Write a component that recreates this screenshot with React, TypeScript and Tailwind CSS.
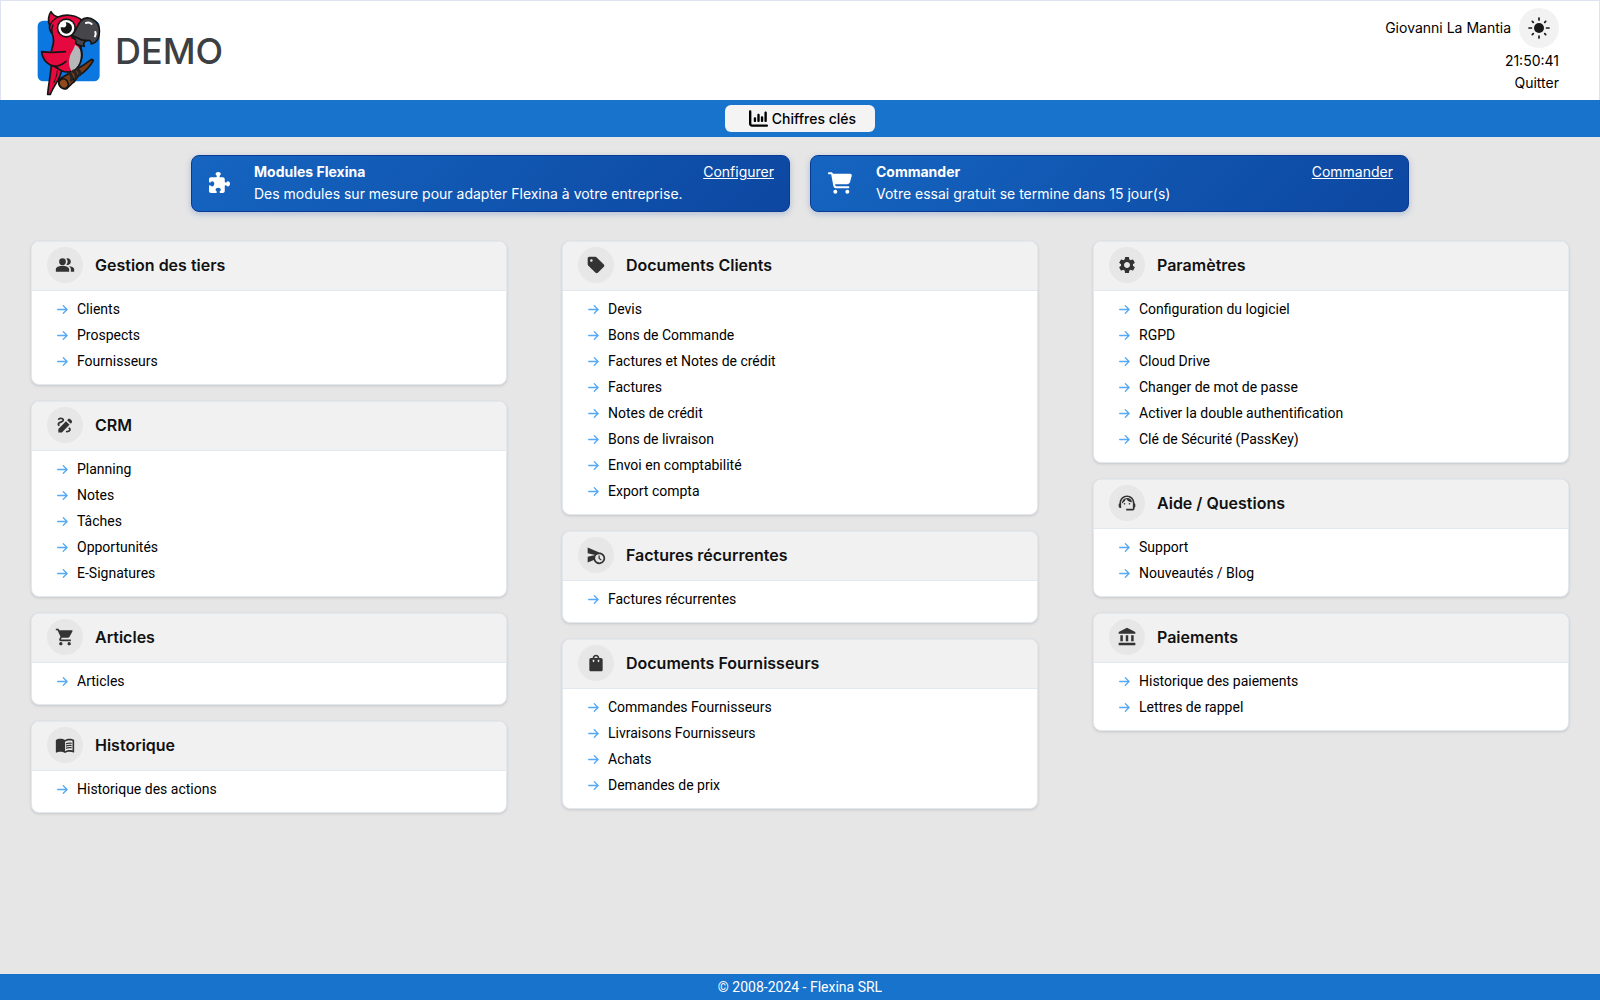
import type { IconType } from "react-icons";
import { FaCartShopping, FaChartColumn, FaPuzzlePiece } from "react-icons/fa6";
import {
  MdAccountBalance,
  MdDraw,
  MdMenuBook,
  MdPeopleAlt,
  MdScheduleSend,
  MdSell,
  MdSettings,
  MdShoppingBag,
  MdShoppingCart,
  MdSupportAgent
} from "react-icons/md";

type Section = { title: string; icon: IconType; links: string[] };

const columns: Section[][] = [
  [
    { title: "Gestion des tiers", icon: MdPeopleAlt, links: ["Clients", "Prospects", "Fournisseurs"] },
    { title: "CRM", icon: MdDraw, links: ["Planning", "Notes", "Tâches", "Opportunités", "E-Signatures"] },
    { title: "Articles", icon: MdShoppingCart, links: ["Articles"] },
    { title: "Historique", icon: MdMenuBook, links: ["Historique des actions"] }
  ],
  [
    {
      title: "Documents Clients",
      icon: MdSell,
      links: [
        "Devis",
        "Bons de Commande",
        "Factures et Notes de crédit",
        "Factures",
        "Notes de crédit",
        "Bons de livraison",
        "Envoi en comptabilité",
        "Export compta"
      ]
    },
    { title: "Factures récurrentes", icon: MdScheduleSend, links: ["Factures récurrentes"] },
    {
      title: "Documents Fournisseurs",
      icon: MdShoppingBag,
      links: ["Commandes Fournisseurs", "Livraisons Fournisseurs", "Achats", "Demandes de prix"]
    }
  ],
  [
    {
      title: "Paramètres",
      icon: MdSettings,
      links: [
        "Configuration du logiciel",
        "RGPD",
        "Cloud Drive",
        "Changer de mot de passe",
        "Activer la double authentification",
        "Clé de Sécurité (PassKey)"
      ]
    },
    { title: "Aide / Questions", icon: MdSupportAgent, links: ["Support", "Nouveautés / Blog"] },
    { title: "Paiements", icon: MdAccountBalance, links: ["Historique des paiements", "Lettres de rappel"] }
  ]
];

const banners = [
  {
    title: "Modules Flexina",
    text: "Des modules sur mesure pour adapter Flexina à votre entreprise.",
    action: "Configurer",
    icon: FaPuzzlePiece,
    iconClass: "size-[21px] shrink-0"
  },
  {
    title: "Commander",
    text: "Votre essai gratuit se termine dans 15 jour(s)",
    action: "Commander",
    icon: FaCartShopping,
    iconClass: "size-6 shrink-0"
  }
];

function ParrotLogo() {
  return (
    <svg viewBox="50 30 192 258" className="h-[86px] w-16" aria-hidden="true">
      <rect x="52" y="62" width="186" height="182" rx="17" fill="#0a78e0" />
      <g stroke="#151515" strokeWidth="5" strokeLinejoin="round" strokeLinecap="round">
        {/* tail */}
        <path d="M93 194 C91 225 84 255 82 283 L90 283 C99 259 118 240 124 212 Z" fill="#e6093f" />
        <path d="M101 248 C106 236 110 224 111 212" fill="none" strokeWidth="3" />
        {/* branch */}
        <path d="M147 215 C171 211 192 194 213 178 L219 181 C209 201 193 216 174 228 L160 247 Z" fill="#7a3c17" />
        <path d="M119 236 L148 219 L163 243 L139 266 C127 270 113 258 115 244 Z" fill="#7a3c17" />
        <ellipse cx="130" cy="251" rx="13" ry="15" fill="#8f4a1e" transform="rotate(-32 130 251)" />
        {/* body */}
        <path
          d="M92 35 C84 45 82 63 88 77 C86 87 89 94 96 102 C102 117 101 129 95 145 L92 160 C90 183 95 199 109 201 C119 212 134 218 150 215 C176 208 188 179 184 154 C183 140 180 133 174 126 L190 65 C169 44 137 41 113 51 C105 49 97 44 92 35 Z"
          fill="#e6093f"
        />
        <path d="M88 77 C93 65 102 57 113 51" fill="none" strokeWidth="4" />
        <path d="M96 102 C93 93 94 83 98 75" fill="none" strokeWidth="4" />
        {/* belly */}
        <path d="M164 134 C176 141 186 153 184 174 C182 191 173 208 155 215 C145 201 144 184 149 168 C153 154 160 151 164 134 Z" fill="#b7b7ba" stroke="none" />
        <path d="M174 132 C190 155 188 199 156 215" fill="none" />
        {/* wing */}
        <path d="M96 154 L64 155 C67 183 87 201 112 198 C125 194 134 188 137 184 L141 155 Z" fill="#e6093f" stroke="none" />
        <path d="M135 155 C112 157 87 159 64 155 C67 183 87 201 112 198 C124 195 132 190 137 184" fill="none" />
        {/* claws */}
        <path d="M147 218 C153 225 156 233 153 240 M160 213 C167 221 170 229 166 236 M171 208 C177 212 180 218 178 224" fill="none" stroke="#242424" strokeWidth="9" />
        {/* beak */}
        <path d="M154 104 C169 94 171 72 182 62 C192 51 209 51 222 61 C238 72 240 94 234 114 C230 124 221 130 213 132 C213 123 208 119 199 122 C191 124 188 132 192 139 C180 136 171 137 166 130 C169 121 164 115 155 113 Z" fill="#46464a" />
        <path d="M158 107 C174 113 181 124 199 121" fill="none" />
      </g>
      <circle cx="138" cy="84" r="29" fill="#151515" />
      <circle cx="138" cy="84" r="24" fill="#fff" />
      <circle cx="138" cy="84" r="17" fill="#151515" />
      <path d="M120 82 A18 18 0 0 1 136 66 L138 73 A8 8 0 0 1 128 82 Z" fill="#fff" />
      <path d="M197 69 C203 66 209 68 214 72 M225 96 C227 100 226 105 224 109" fill="none" stroke="#fff" strokeWidth="6" strokeLinecap="round" />
    </svg>
  );
}

function SunIcon() {
  return (
    <svg viewBox="0 0 22 22" className="size-[22px]" aria-hidden="true">
      <circle cx="11" cy="11" r="5" fill="#1a1a1a" />
      <path
        d="M11 1v2M11 19v2M1 11h2.5M18.5 11h2.5M4.3 4.3l1 1M16.7 16.7l1 1M17.7 4.3l-1 1M5.3 16.7l-1 1"
        stroke="#1a1a1a"
        strokeWidth="1.7"
        strokeLinecap="round"
      />
    </svg>
  );
}

function ArrowIcon() {
  return (
    <svg viewBox="0 0 11 11" className="size-[11px] shrink-0" fill="none" stroke="#55a9f5" strokeWidth="1.3" aria-hidden="true">
      <path d="M.7 5.5h9.2M6.3 1.7l3.8 3.8-3.8 3.8" strokeLinecap="round" strokeLinejoin="round" />
    </svg>
  );
}

function SectionCard({ title, icon: Icon, links }: Section) {
  return (
    <section className="overflow-hidden rounded-lg border border-[#e2e8f0] bg-white shadow-[0_1px_3px_rgba(0,0,0,0.14)]">
      <div className="flex h-[49px] items-center gap-3 border-b border-[#e2e8f0] bg-[#f1f1f1] px-[15px] pb-0.5">
        <span className="flex size-9 items-center justify-center rounded-full bg-[#e7e7e7] text-[#333]">
          <Icon size={20} />
        </span>
        <h2 className="text-base font-semibold text-[#111]">{title}</h2>
      </div>
      <ul className="px-[25px] pt-[5px] pb-2.5">
        {links.map((link) => (
          <li key={link}>
            <a href="#" className="flex h-[26px] items-center gap-[9px] font-['Roboto',sans-serif] text-sm text-black hover:underline">
              <ArrowIcon />
              {link}
            </a>
          </li>
        ))}
      </ul>
    </section>
  );
}

export default function App() {
  return (
    <div className="flex min-h-screen flex-col bg-[#e6e6e6] font-['Inter',sans-serif] text-black">
      <header className="flex h-[100px] items-center justify-between border border-b-0 border-[#dfe3f1] bg-white pr-10 pl-9">
        <a href="#" className="flex items-center gap-3.5 pt-1">
          <ParrotLogo />
          <span className="pb-1 text-4xl font-medium text-[#3c4043]">DEMO</span>
        </a>
        <div className="flex flex-col items-end text-sm">
          <div className="flex items-center gap-2">
            <span>Giovanni La Mantia</span>
            <button type="button" aria-label="Thème" className="flex size-10 items-center justify-center rounded-full bg-[#f2f2f2]">
              <SunIcon />
            </button>
          </div>
          <time className="mt-0.5 leading-[22px]">21:50:41</time>
          <a href="#" className="leading-[22px]">Quitter</a>
        </div>
      </header>

      <nav className="flex h-[37px] items-center justify-center bg-[#1873cc]">
        <button type="button" className="flex h-[27px] items-center gap-1 rounded-md bg-[#f4f4f4] pr-[19px] pl-6 text-sm font-medium">
          <FaChartColumn size={19} />
          Chiffres clés
        </button>
      </nav>

      <main className="flex flex-col px-[31px] pb-8">
        <div className="mx-auto mt-[18px] grid w-full max-w-[1218px] grid-cols-2 gap-5">
          {banners.map(({ title, text, action, icon: Icon, iconClass }) => (
            <article
              key={title}
              className="flex h-[57px] items-center rounded-lg border border-[#0b3a94] bg-linear-135 from-[#1565c0] to-[#0d47a1] pr-[15px] pb-0.5 pl-[17px] text-sm text-white shadow-[0_2px_6px_rgba(13,71,161,0.25)]"
            >
              <Icon className={iconClass} />
              <div className="ml-6 flex-1">
                <div className="flex justify-between leading-[22px]">
                  <h2 className="font-bold">{title}</h2>
                  <a href="#" className="underline">{action}</a>
                </div>
                <p className="leading-[22px]">{text}</p>
              </div>
            </article>
          ))}
        </div>

        <div className="mt-[29px] grid grid-cols-3 items-start gap-[55px]">
          {columns.map((sections) => (
            <div key={sections[0].title} className="flex flex-col gap-4">
              {sections.map((section) => (
                <SectionCard key={section.title} {...section} />
              ))}
            </div>
          ))}
        </div>
      </main>

      <footer className="mt-auto flex h-[26px] items-center justify-center bg-[#1873cc] font-['Roboto',sans-serif] text-sm text-white">
        © 2008-2024 - Flexina SRL
      </footer>
    </div>
  );
}
